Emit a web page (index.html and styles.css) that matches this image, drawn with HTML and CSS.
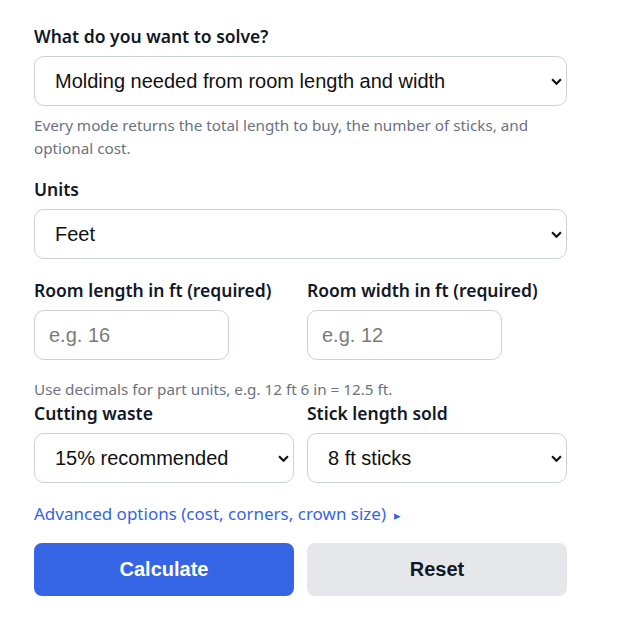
FILE: index.html
```html
<!DOCTYPE html>
<html lang="en">
<head>
  <meta charset="UTF-8" />
  <meta name="viewport" content="width=device-width, initial-scale=1.0"/>
  <title>Molding Calculator</title>
  <link rel="stylesheet" href="styles.css">
</head>
<body>
  <form class="calc">
    <div class="field">
      <label for="mode">What do you want to solve?</label>
      <div class="select-wrap">
        <select id="mode">
          <option>Molding needed from room length and width</option>
        </select>
        <svg class="chev" viewBox="0 0 10 6"><path d="M1 1l4 4 4-4"/></svg>
      </div>
      <p class="hint">Every mode returns the total length to buy, the number of sticks, and optional cost.</p>
    </div>

    <div class="field">
      <label for="units">Units</label>
      <div class="select-wrap">
        <select id="units">
          <option>Feet</option>
        </select>
        <svg class="chev" viewBox="0 0 10 6"><path d="M1 1l4 4 4-4"/></svg>
      </div>
    </div>

    <div class="row">
      <div class="field">
        <label for="length">Room length in ft (required)</label>
        <input type="text" id="length" placeholder="e.g. 16" />
      </div>
      <div class="field">
        <label for="width">Room width in ft (required)</label>
        <input type="text" id="width" placeholder="e.g. 12" />
      </div>
    </div>
    <p class="hint hint-row">Use decimals for part units, e.g. 12 ft 6 in = 12.5 ft.</p>

    <div class="row">
      <div class="field">
        <label for="waste">Cutting waste</label>
        <div class="select-wrap">
          <select id="waste">
            <option>15% recommended</option>
          </select>
          <svg class="chev" viewBox="0 0 10 6"><path d="M1 1l4 4 4-4"/></svg>
        </div>
      </div>
      <div class="field">
        <label for="stick">Stick length sold</label>
        <div class="select-wrap">
          <select id="stick">
            <option>8 ft sticks</option>
          </select>
          <svg class="chev" viewBox="0 0 10 6"><path d="M1 1l4 4 4-4"/></svg>
        </div>
      </div>
    </div>

    <a href="#" class="advanced">Advanced options (cost, corners, crown size) <span class="tri">&#9656;</span></a>

    <div class="row buttons">
      <button type="submit" class="btn-primary">Calculate</button>
      <button type="reset" class="btn-secondary">Reset</button>
    </div>
  </form>
</body>
</html>
```

FILE: styles.css
```css
body {
  margin: 0;
  background: #fff;
  font-family: "Noto Sans", "Open Sans", sans-serif;
  color: #111827;
}
.calc {
  width: 533px;
  padding: 24px 0 0 34px;
}
.field {
  display: flex;
  flex-direction: column;
}
label {
  font-size: 17.5px;
  font-weight: 600;
  line-height: 24px;
  margin-bottom: 8px;
}
.select-wrap {
  position: relative;
}
select, input {
  font-family: "Liberation Sans", Arial, sans-serif;
  font-size: 20px;
  color: #111;
  background: white;
  border: 1px solid #cbd2dc;
  border-radius: 10px;
  box-sizing: border-box;
  height: 50px;
}
select {
  width: 100%;
  padding: 0 30px 0 20px;
  appearance: none;
  -webkit-appearance: none;
}
.chev {
  position: absolute;
  right: 5px;
  top: 50%;
  width: 11px;
  height: 7px;
  margin-top: -3px;
  fill: none;
  stroke: #111;
  stroke-width: 2;
  pointer-events: none;
}
input {
  width: 195px;
  padding: 0 14px;
}
input::placeholder {
  color: #7b7b7b;
}
.hint {
  font-size: 15.25px;
  line-height: 23px;
  color: #6b7280;
  margin: 8px 0 0;
}
.calc > .field + .field {
  margin-top: 17px;
}
.calc > .field + .row {
  margin-top: 19px;
}
.row {
  display: grid;
  grid-template-columns: 1fr 1fr;
  gap: 13px;
}
.hint-row {
  margin: 18px 0 0;
}
.advanced {
  display: inline-block;
  margin-top: 19px;
  font-size: 17px;
  line-height: 24px;
  color: #3565e5;
  text-decoration: none;
}
.tri {
  font-size: 13px;
  margin-left: 4px;
}
.buttons {
  margin-top: 16px;
}
button {
  height: 53px;
  border: none;
  border-radius: 8px;
  font-family: "Liberation Sans", Arial, sans-serif;
  font-weight: bold;
  font-size: 20px;
  cursor: pointer;
}
.btn-primary {
  background: #3565e5;
  color: white;
}
.btn-secondary {
  background: #e5e7eb;
  color: #111827;
}
```
